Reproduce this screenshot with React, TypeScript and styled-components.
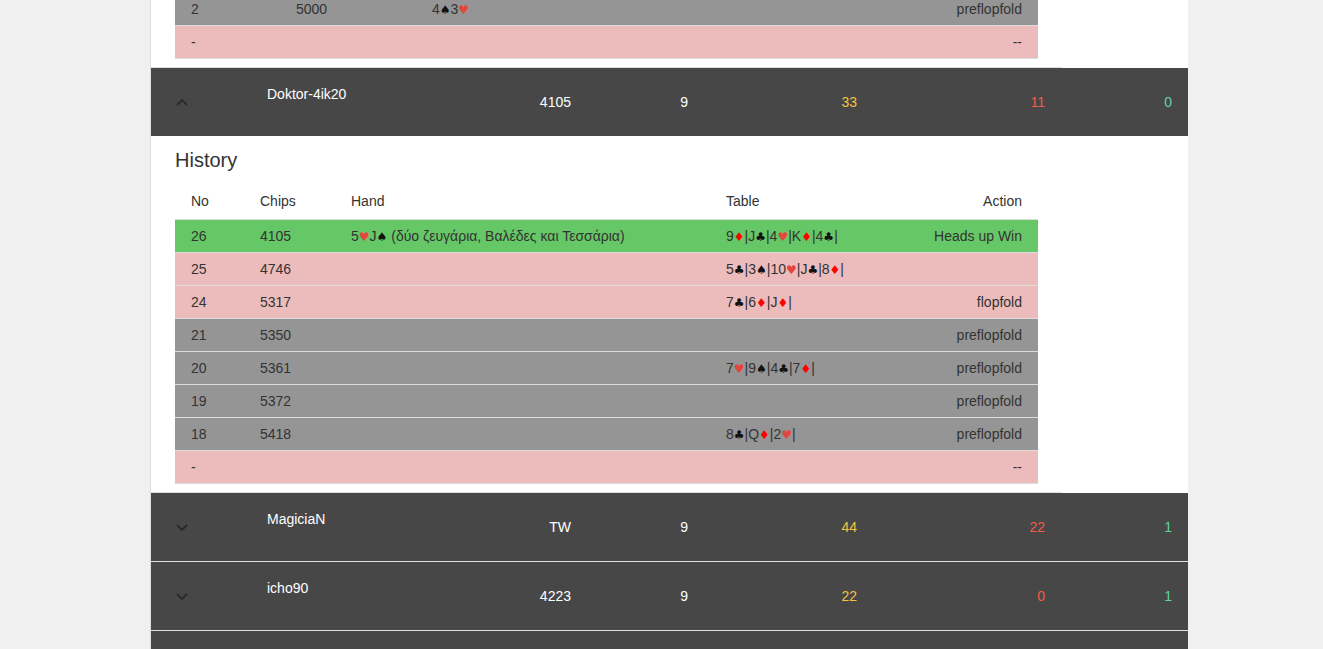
import React from 'react';
import styled, {createGlobalStyle} from 'styled-components';

type Variant = 'win' | 'lose' | 'fold' | 'empty';

interface HistoryRow {
  no: string;
  chips: string;
  hand?: string[];
  handText?: string;
  table?: string[];
  action: string;
  variant: Variant;
}

interface Player {
  name: string;
  chips: string;
  hands: string;
  stat1: string;
  stat2: string;
  stat3: string;
  open?: boolean;
}

const SUITS: Record<string, string> = {s: '♠', c: '♣', h: '♥', d: '♦'};

// Tail of the previous player's history, partly scrolled off the top
const previousRows: HistoryRow[] = [
  {no: '2', chips: '5000', hand: ['4s', '3h'], action: 'preflopfold', variant: 'fold'},
  {no: '-', chips: '', action: '--', variant: 'empty'},
];

const history: HistoryRow[] = [
  {
    no: '26',
    chips: '4105',
    hand: ['5h', 'Js'],
    handText: ' (δύο ζευγάρια, Βαλέδες και Τεσσάρια)',
    table: ['9d', 'Jc', '4h', 'Kd', '4c'],
    action: 'Heads up Win',
    variant: 'win',
  },
  {no: '25', chips: '4746', table: ['5c', '3s', '10h', 'Jc', '8d'], action: '', variant: 'lose'},
  {no: '24', chips: '5317', table: ['7c', '6d', 'Jd'], action: 'flopfold', variant: 'lose'},
  {no: '21', chips: '5350', action: 'preflopfold', variant: 'fold'},
  {no: '20', chips: '5361', table: ['7h', '9s', '4c', '7d'], action: 'preflopfold', variant: 'fold'},
  {no: '19', chips: '5372', action: 'preflopfold', variant: 'fold'},
  {no: '18', chips: '5418', table: ['8c', 'Qd', '2h'], action: 'preflopfold', variant: 'fold'},
  {no: '-', chips: '', action: '--', variant: 'empty'},
];

const players: Player[] = [
  {name: 'MagiciaN', chips: 'TW', hands: '9', stat1: '44', stat2: '22', stat3: '1'},
  {name: 'icho90', chips: '4223', hands: '9', stat1: '22', stat2: '0', stat3: '1'},
];

const Card = ({code}: {code: string}) => {
  const rank = code.slice(0, -1);
  const suit = code.slice(-1);
  return (
    <>
      {rank}
      <Suit $suit={suit}>{SUITS[suit]}</Suit>
    </>
  );
};

const Chevron = ({up}: {up?: boolean}) => (
  <svg width="12" height="7" viewBox="0 0 12 7">
    <polyline
      points={up ? '1,6 6,1 11,6' : '1,1 6,6 11,1'}
      fill="none"
      stroke="#2a2a2a"
      strokeWidth="1.8"
    />
  </svg>
);

const HistoryTable = ({rows, cols, head}: {rows: HistoryRow[]; cols: string; head?: boolean}) => (
  <Table>
    {head && (
      <HeadRow $cols={cols}>
        <Cell>No</Cell>
        <Cell>Chips</Cell>
        <Cell>Hand</Cell>
        <Cell>Table</Cell>
        <Cell $right>Action</Cell>
      </HeadRow>
    )}
    {rows.map((r, i) => (
      <Row key={i} $cols={cols} $variant={r.variant}>
        <Cell>{r.no}</Cell>
        <Cell>{r.chips}</Cell>
        <Cell>
          {r.hand?.map(c => <Card key={c} code={c} />)}
          {r.handText}
        </Cell>
        <Cell>
          {r.table?.map(c => (
            <React.Fragment key={c}>
              <Card code={c} />|
            </React.Fragment>
          ))}
        </Cell>
        <Cell $right>{r.action}</Cell>
      </Row>
    ))}
  </Table>
);

const PlayerRow = ({player, divider}: {player: Player; divider?: boolean}) => (
  <DarkRow $divider={divider}>
    <ToggleCell>
      <Chevron up={player.open} />
    </ToggleCell>
    <NameCell>{player.name}</NameCell>
    <NumCell>{player.chips}</NumCell>
    <NumCell>{player.hands}</NumCell>
    <NumCell $color="#f2c343">{player.stat1}</NumCell>
    <NumCell $color="#f25c47">{player.stat2}</NumCell>
    <NumCell $color="#63d3a0" $last>
      {player.stat3}
    </NumCell>
  </DarkRow>
);

const App = () => (
  <Page>
    <GlobalStyle />
    <Panel>
      <Expanded $noHead>
        <ExpandedInner>
          <HistoryTable rows={previousRows} cols="105px 136px 1fr 188px 140px" />
        </ExpandedInner>
      </Expanded>

      <PlayerRow
        player={{name: 'Doktor-4ik20', chips: '4105', hands: '9', stat1: '33', stat2: '11', stat3: '0', open: true}}
      />
      <Expanded>
        <ExpandedInner>
          <Heading>History</Heading>
          <HistoryTable rows={history} cols="69px 91px 375px 188px 140px" head />
        </ExpandedInner>
      </Expanded>

      {players.map((p, i) => (
        <PlayerRow key={p.name} player={p} divider={i > 0} />
      ))}
      <DarkRow $divider>
        <ToggleCell>
          <Chevron />
        </ToggleCell>
      </DarkRow>
    </Panel>
  </Page>
);

export default App;

const GlobalStyle = createGlobalStyle`
  html, body {
    margin: 0;
    background: #f0f0f0;
    overflow: hidden;
  }
  body {
    font-family: "Liberation Sans", Arial, sans-serif;
    font-size: 14px;
    color: #333;
  }
`;

const Page = styled.div`
  height: 649px;
  overflow: hidden;
  padding-left: 150px;
`;

// negative top margin stands in for the page's scroll position
const Panel = styled.div`
  width: 1038px;
  margin-top: -8px;
  background: #fff;
  border-left: 1px solid #dcdcdc;
  box-sizing: border-box;
`;

const Expanded = styled.div<{$noHead?: boolean}>`
  padding-top: ${p => (p.$noHead ? '0' : '13px')};
`;

const ExpandedInner = styled.div`
  width: 911px;
  box-sizing: border-box;
  padding: 0 0 8px 24px;
  border-bottom: 1px solid #ddd;
`;

const Heading = styled.h4`
  margin: 0 0 14px;
  font-size: 20px;
  font-weight: 400;
  line-height: 22px;
  color: #333;
`;

const Table = styled.div`
  width: 863px;
  border-bottom: 1px solid #ddd;
`;

const rowBg: Record<Variant, string> = {
  win: '#66c766',
  lose: '#ecbbbb',
  fold: '#959595',
  empty: '#ecbbbb',
};

const Row = styled.div<{$cols: string; $variant: Variant}>`
  display: grid;
  grid-template-columns: ${p => p.$cols};
  align-items: center;
  min-height: 32px;
  line-height: 20px;
  background: ${p => rowBg[p.$variant]};
  border-top: 1px solid #ddd;
  color: #333;
`;

const HeadRow = styled.div<{$cols: string}>`
  display: grid;
  grid-template-columns: ${p => p.$cols};
  align-items: start;
  height: 34px;
  box-sizing: border-box;
  padding-top: 6px;
  line-height: 20px;
  background: #fff;
  color: #333;
`;

const Cell = styled.div<{$right?: boolean}>`
  padding: 0 16px;
  text-align: ${p => (p.$right ? 'right' : 'left')};
  white-space: nowrap;
`;

const Suit = styled.span<{$suit: string}>`
  font-family: "DejaVu Sans", sans-serif;
  font-size: 12px;
  color: ${p => (p.$suit === 'd' ? '#ff0000' : p.$suit === 'h' ? '#e2473d' : '#111')};
`;

const DarkRow = styled.div<{$divider?: boolean}>`
  display: grid;
  grid-template-columns: 108px 201px 119px 117px 169px 188px 1fr;
  align-items: center;
  height: 68px;
  background: #474747;
  color: #fff;
  font-size: 14px;
  line-height: 20px;
  border-top: ${p => (p.$divider ? '1px solid #ddd' : 'none')};
`;

const ToggleCell = styled.div`
  display: flex;
  align-items: center;
  padding-left: 25px;
`;

const NameCell = styled.div`
  align-self: start;
  padding: 16px 8px 0;
`;

const NumCell = styled.div<{$color?: string; $last?: boolean}>`
  text-align: right;
  padding-right: ${p => (p.$last ? '16px' : '8px')};
  color: ${p => p.$color || '#fff'};
`;
